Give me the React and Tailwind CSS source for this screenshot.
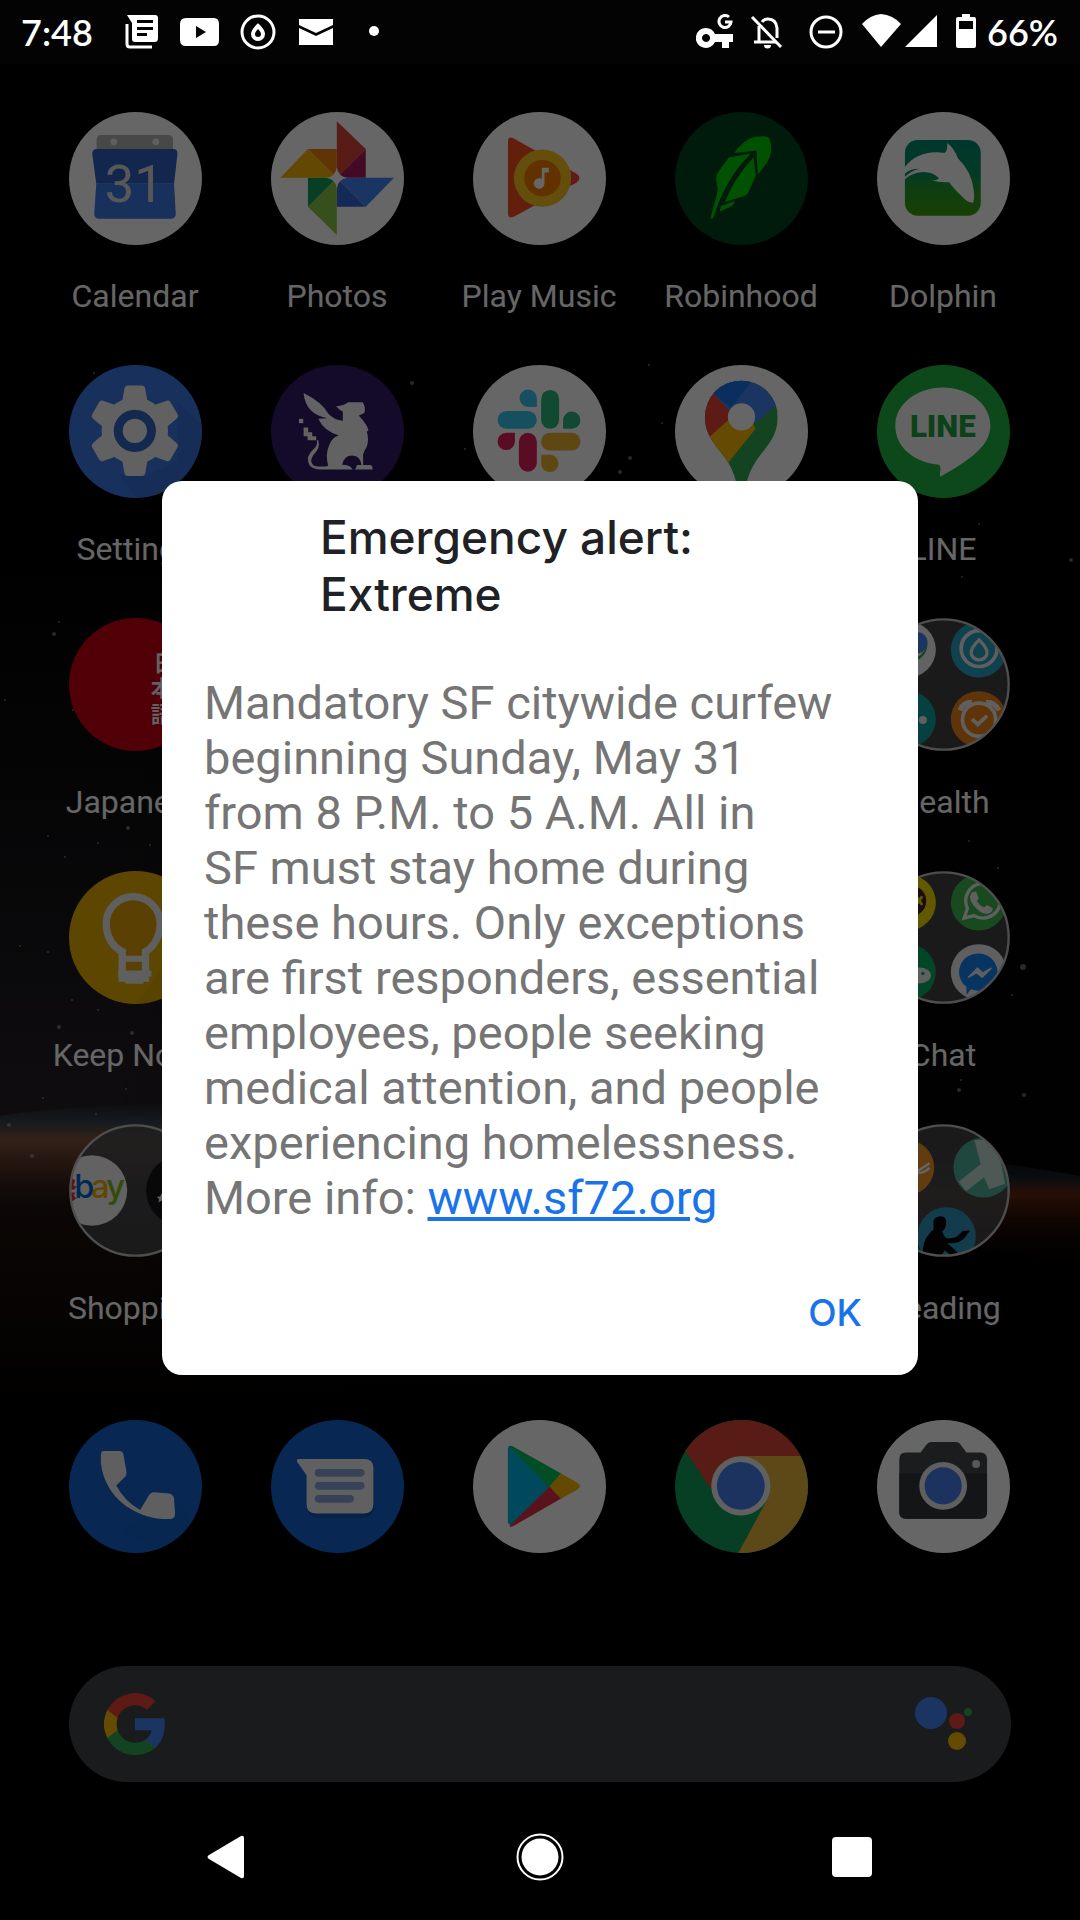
const WHITE = "#fff";

function AppIcon({ bg = "#fff", children }) {
  return (
    <svg viewBox="0 0 400 400" className="block size-[133px] overflow-hidden rounded-full" aria-hidden="true">
      <rect width="400" height="400" fill={bg} />
      {children}
    </svg>
  );
}

function FolderIcon({ id, children }) {
  return (
    <svg viewBox="0 0 400 400" className="block size-[133px]" aria-hidden="true">
      <clipPath id={id}>
        <circle cx="200" cy="200" r="196" />
      </clipPath>
      <g clipPath={`url(#${id})`}>
        <circle cx="200" cy="200" r="196" fill="#4c4c50" fillOpacity="0.85" />
        {children}
      </g>
      <circle cx="200" cy="200" r="196" fill="none" stroke="#c4c4c4" strokeWidth="7" />
    </svg>
  );
}

const CalendarIcon = () => (
  <AppIcon>
    <path d="M83 120V84q0-15 15-15h200q15 0 15 15v36z" fill="#b5b5b5" />
    <circle cx="135" cy="90" r="10" fill="#eee" />
    <circle cx="261" cy="90" r="10" fill="#eee" />
    <path d="M84 111h229q14 0 13 15l-10 90H82L70 126q0-15 14-15z" fill="#2f5fc4" />
    <path d="M82 216h234l5 90q0 15-15 15H91q-15 0-15-15z" fill="#3b78e7" />
    <text x="196" y="272" textAnchor="middle" fontSize="158" fontWeight="400" fontFamily="Roboto, sans-serif" fill="#ddd">31</text>
  </AppIcon>
);

const PhotosIcon = () => (
  <AppIcon>
    <path d="M198 28l87 83-87 87z" fill="#db4437" />
    <path d="M285 111v87h-87z" fill="#a8195f" />
    <path d="M198 198h172l-85 87z" fill="#4285f4" />
    <path d="M198 198l87 87h-87z" fill="#3367d6" />
    <path d="M198 198v172l-87-85z" fill="#8bc34a" />
    <path d="M198 198l-87 87v-87z" fill="#0f9d58" />
    <path d="M28 198l83-87 87 87z" fill="#f4b400" />
    <path d="M111 111h87v87z" fill="#f0860f" />
    <path d="M198 166q4 28 32 32-28 4-32 32-4-28-32-32 28-4 32-32z" fill="#fff" />
  </AppIcon>
);

const PlayMusicIcon = () => (
  <AppIcon>
    <clipPath id="music-tri">
      <path d="M105 90q0-20 18-10l188 106q18 13 0 26L123 315q-18 8-18-12z" />
    </clipPath>
    <g clipPath="url(#music-tri)">
      <rect width="400" height="400" fill="#f4511e" />
      <path d="M209 111a88 88 0 0 1 88 88L240 290 150 265z" fill="#e6a019" />
      <rect x="295" y="150" width="60" height="100" fill="#f2483b" />
    </g>
    <circle cx="209" cy="199" r="86" fill="#fbc31f" />
    <circle cx="209" cy="199" r="55" fill="#f57c00" />
    <path d="M207 168h21v14h-13v33a16 16 0 1 1-8-14z" fill="#fff" />
  </AppIcon>
);

const RobinhoodIcon = () => (
  <AppIcon bg="#00421f">
    <g fill="#00cc05">
      <path d="M178 123q30-42 62-48 28-4 40 1 10 6 9 44-2 24-40 68l-4-72z" />
      <path d="M162 137l66-12q-76 80-96 138l-4-40q-10-24 3-44z" />
      <path d="M236 136l7 54-18 42q-6 20-26 24l-49 15q24-66 86-135z" />
      <path d="M130 228q-4 20-10 42l-14 50h8l16-44q24-60 60-110z" />
      <path d="M138 283l43-15-9 15-37 16z" />
    </g>
  </AppIcon>
);

const DolphinIcon = () => (
  <AppIcon>
    <defs>
      <linearGradient id="dolphin-sea" x1="0" y1="0" x2="0" y2="1">
        <stop offset="0" stopColor="#008a70" />
        <stop offset="0.45" stopColor="#0a9060" />
        <stop offset="0.6" stopColor="#209a35" />
        <stop offset="1" stopColor="#3ea008" />
      </linearGradient>
    </defs>
    <rect x="84" y="84" width="228" height="228" rx="38" fill="url(#dolphin-sea)" />
    <path d="M82 168q34-48 100-47l22 2q9-8 7-30 22 16 32 46 42 40 48 96 3 24-2 38-18 0-32-18-26-24-40-44-24 2-50-4 14-2 20-8-28-26-66-16-24 6-39 22v-8q20-20 46-26-30 0-46 16z" fill="#fff" />
  </AppIcon>
);

const TEETH = [0, 60, 120, 180, 240, 300];

const SettingsIcon = () => (
  <AppIcon bg="#3b78e7">
    <path d="M150 330l80 6 96-50V110l74 70v220H200z" fill="#2f5fc0" opacity="0.25" />
    {TEETH.map((a) => (
      <path key={a} transform={`rotate(${a} 198 198)`} d="M176 62h44q7 0 9 8l7 38q4 14 18 12v40H142v-40q14 2 18-12l7-38q2-8 9-8z" fill="#f3f3f3" />
    ))}
    <circle cx="198" cy="198" r="100" fill="#f3f3f3" />
    <circle cx="198" cy="198" r="50" fill="none" stroke="#3367c6" strokeWidth="27" />
  </AppIcon>
);

const GryphonIcon = () => (
  <AppIcon bg="#341a66">
    <path d="M98 84Q154 112 172 146 190 166 216 168V140Q206 136 196 124 220 122 232 112H276Q284 124 282 142 274 150 264 152 292 182 293 198L288 200Q296 224 288 246 280 258 277 270V301H300Q306 304 306 314H145Q111 312 111 282 111 270 129 252 143 238 137 226H110V214H98V188H112V202H124V214H136V226H142Q150 248 128 270 114 290 128 302 146 308 172 304 162 268 176 238 186 216 204 212 160 200 142 162L170 160Q104 148 98 84z" fill="#f4f4f4" />
    <rect x="84" y="162" width="13" height="13" fill="#f4f4f4" />
    <path d="M214 300Q220 272 244 272 270 274 272 301H258Q258 308 252 316H246Q240 300 214 300z" fill="#341a66" />
  </AppIcon>
);

const SlackIcon = () => (
  <AppIcon>
    <g fill="#36c5f0">
      <rect x="74" y="138" width="118" height="54" rx="27" />
      <path d="M192 126h-27a26 26 0 1 1 27-26z" />
    </g>
    <g fill="#2eb67d">
      <rect x="205" y="75" width="54" height="117" rx="27" />
      <path d="M271 192v-27a26 26 0 1 1 26 27z" />
    </g>
    <g fill="#ecb22e">
      <rect x="205" y="204" width="118" height="53" rx="26" />
      <path d="M205 270h27a26 26 0 1 1-27 26z" />
    </g>
    <g fill="#e01e5a">
      <rect x="138" y="204" width="54" height="117" rx="27" />
      <path d="M126 204v27a26 26 0 1 1-26-27z" />
    </g>
  </AppIcon>
);

const MapsIcon = () => (
  <AppIcon>
    <clipPath id="maps-pin">
      <path d="M200 47a109 109 0 0 1 109 109c0 48-22 78-50 112-22 28-36 54-45 92q-14 30-28 0c-9-38-20-60-38-84-28-36-58-66-58-120A109 109 0 0 1 200 47z" />
    </clipPath>
    <g clipPath="url(#maps-pin)">
      <rect width="400" height="400" fill="#34a853" />
      <path d="M80 240L200 100l42 92-90 112-72-20z" fill="#fbbc04" />
      <path d="M80 70h40l80 60-94 84-46-14z" fill="#ea4335" />
      <path d="M114 84L160 30h160v76l-76 68-60-40-20 4z" fill="#4285f4" />
      <path d="M114 84L150 30h94l-76 100z" fill="#1a73e8" />
    </g>
    <circle cx="200" cy="156" r="41" fill="#fff" />
  </AppIcon>
);

const LineIcon = () => (
  <AppIcon bg="#22b545">
    <path d="M198 68c78 0 143 50 143 114 0 56-50 98-151 154-3-12 6-30-4-36C108 292 55 246 55 182 55 118 120 68 198 68z" fill="#f8f8f8" />
    <text x="198" y="218" textAnchor="middle" fontSize="94" fontWeight="900" fontFamily="Roboto, sans-serif" fill="#1da540">LINE</text>
  </AppIcon>
);

const JapaneseIcon = () => (
  <AppIcon bg="#c8000f">
    <g fontSize="66" fontWeight="700" fontFamily="'Noto Sans CJK JP', sans-serif" fill="#f2f2f2">
      <text x="254" y="160">日</text>
      <text x="246" y="236">本</text>
      <text x="246" y="312">語</text>
    </g>
  </AppIcon>
);

const KeepIcon = () => (
  <AppIcon bg="#e9b000">
    <path d="M250 337l70-130 80 60v133H200z" fill="#b98a00" opacity="0.25" />
    <path d="M160 322v-80c-26-12-48-42-48-84a81 81 0 0 1 162 0c0 42-22 72-44 84v80z" fill="#e0a106" stroke="#eee" strokeWidth="22" />
    <path d="M160 264h76M148 308h100M170 330h54" stroke="#eee" strokeWidth="18" />
  </AppIcon>
);

const ShoppingFolder = () => (
  <FolderIcon id="fold-shop">
    <circle cx="69" cy="200" r="106" fill="#f4f4f4" />
    <path d="M5 160l14 10-6 14 10 4-8 10h-12zM6 206h14l-6 8 8 10-12 8-8-4z" fill="#e53238" />
    <g fontSize="98" fontFamily="Inter, sans-serif" fontWeight="500">
      <text x="16" y="224" fill="#0064d2">b</text>
      <text x="66" y="224" fill="#f5af02">a</text>
      <text x="112" y="224" fill="#86b817">y</text>
    </g>
    <circle cx="338" cy="200" r="106" fill="#161618" />
    <path d="M278 208l4 10 10 1-8 7 3 10-9-5-9 5 2-10-7-7 10-1z" fill="#eee" />
  </FolderIcon>
);

const HealthFolder = () => (
  <FolderIcon id="fold-health">
    <circle cx="93" cy="95" r="84" fill="#f4f4f4" />
    <circle cx="120" cy="74" r="32" fill="#4285f4" />
    <path d="M98 126q40-6 54-46 0 30-34 50z" fill="#34a853" />
    <circle cx="306" cy="95" r="84" fill="#27a4c4" />
    <circle cx="307" cy="92" r="54" fill="none" stroke="#eee" strokeWidth="11" />
    <path d="M307 66q24 24 24 38a24 22 0 0 1-48 0q0-14 24-38z" fill="none" stroke="#eee" strokeWidth="10" />
    <circle cx="93" cy="304" r="84" fill="#0fa0a0" />
    <circle cx="138" cy="307" r="12" fill="#eee" />
    <circle cx="306" cy="304" r="84" fill="#f08318" />
    <circle cx="307" cy="306" r="50" fill="none" stroke="#eee" strokeWidth="11" />
    <path d="M250 278q8-24 36-24M328 254q28 0 38 24" fill="none" stroke="#eee" strokeWidth="16" />
    <path d="M286 304l17 16 28-26" fill="none" stroke="#eee" strokeWidth="11" />
  </FolderIcon>
);

const ChatFolder = () => (
  <FolderIcon id="fold-chat">
    <circle cx="93" cy="95" r="84" fill="#f5dc00" />
    <circle cx="102" cy="90" r="46" fill="#4a2022" />
    <path d="M118 76l18 26m0-26l-18 26" stroke="#f5dc00" strokeWidth="8" />
    <circle cx="306" cy="95" r="84" fill="#3cb84e" />
    <path d="M262 142l10-30a52 52 0 1 1 20 22z" fill="none" stroke="#eee" strokeWidth="10" />
    <path d="M286 64l12-2 8 20-6 8q8 14 22 20l9-8 17 10q0 12-12 16-18 4-38-16-22-22-18-38z" fill="#eee" />
    <circle cx="93" cy="304" r="84" fill="#06ad62" />
    <ellipse cx="128" cy="314" rx="34" ry="24" fill="#eee" />
    <circle cx="138" cy="308" r="5" fill="#06ad62" />
    <circle cx="306" cy="304" r="84" fill="#eee" />
    <path d="M307 248a58 56 0 1 1-24 108l-14 16v-24a58 56 0 0 1 38-100z" fill="#1283f0" />
    <path d="M274 320l28-28 16 14 26-14-28 28-16-14z" fill="#eee" stroke="#eee" strokeWidth="4" />
  </FolderIcon>
);

const ReadingFolder = () => (
  <FolderIcon id="fold-read">
    <circle cx="88" cy="131" r="84" fill="#f0962a" />
    <path d="M116 146l42-28m-34 30q20-2 34-16" stroke="#fff" strokeWidth="7" fill="none" />
    <circle cx="320" cy="131" r="90" fill="#4fb19b" />
    <path d="M293 48H342L358 84 372 66 396 90 372 112 385 180 338 196 322 160 268 202 246 174 312 120z" fill="#c3ddd5" />
    <circle cx="209" cy="338" r="88" fill="#2f96bd" />
    <path d="M170 304Q166 282 186 278 206 276 208 292 208 318 196 322 200 338 210 344 232 344 240 338L258 322 280 320 262 344Q242 362 210 358 238 378 252 400H228L204 380 190 400H138Q134 354 158 330 162 320 170 318z" fill="#050607" />
  </FolderIcon>
);

const PhoneIcon = () => (
  <AppIcon bg="#1565d0">
    <path d="M150 340l140 50 80-90-60-70z" fill="#0e4796" opacity="0.15" />
    <path d="M104 93h48q10 0 12 12l9 52q0 12-9 18l-22 22q26 48 72 74l24-40q6-14 18-14l44 4q14 2 16 16l3 44q0 17-16 17h-22C200 292 108 236 96 130v-24q0-13 8-13z" fill="#eee" />
  </AppIcon>
);

const MessagesIcon = () => (
  <AppIcon bg="#1565d0">
    <rect x="110" y="130" width="200" height="164" rx="30" fill="#0e4796" opacity="0.6" />
    <path d="M84 117h196q28 0 28 28v108q0 28-28 28H135q-28 0-28-28V166L79 126q-4-9 5-9z" fill="#f0f0f0" />
    <path d="M143 159h127M143 198h127M143 237h95" stroke="#8aa4dc" strokeWidth="23" strokeLinecap="round" />
  </AppIcon>
);

const PlayStoreIcon = () => (
  <AppIcon>
    <path d="M105 86v224l10 8 118-119L115 78q-10-2-10 8z" fill="#00b4e6" />
    <path d="M109 79q4-4 14 2l142 80-36 43z" fill="#00c060" />
    <path d="M109 319q4 4 14-1l142-82-34-36z" fill="#e02f44" />
    <path d="M265 161l48 27q18 11 0 22l-48 27-35-38z" fill="#f8b800" />
  </AppIcon>
);

const ChromeIcon = () => (
  <AppIcon bg="#0f9d58">
    <path d="M197 108h210v300H186l89-164z" fill="#e8b43a" />
    <path d="M30 92V0h370v108H197q-76 6-88 100z" fill="#db4437" />
    <circle cx="198" cy="198" r="89" fill="#f1f1f1" />
    <circle cx="198" cy="198" r="72" fill="#4a80ee" />
  </AppIcon>
);

const CameraIcon = () => (
  <AppIcon>
    <path d="M163 66h74q10 0 15 9l17 23h42q20 0 20 20v159q0 20-20 20H87q-20 0-20-20V118q0-20 20-20h44l17-23q6-9 15-9z" fill="#44474b" />
    <path d="M67 160h264v117q0 20-20 20H87q-20 0-20-20z" fill="#33363a" />
    <circle cx="298" cy="132" r="12" fill="#ddd" />
    <circle cx="199" cy="198" r="72" fill="#eee" />
    <circle cx="199" cy="198" r="56" fill="#4a80ee" />
  </AppIcon>
);

const APPS = [
  { name: "Calendar", Icon: CalendarIcon, col: "col-start-1", label: true },
  { name: "Photos", Icon: PhotosIcon, col: "col-start-2", label: true },
  { name: "Play Music", Icon: PlayMusicIcon, col: "col-start-3", label: true },
  { name: "Robinhood", Icon: RobinhoodIcon, col: "col-start-4", label: true },
  { name: "Dolphin", Icon: DolphinIcon, col: "col-start-5", label: true },
  { name: "Settings", Icon: SettingsIcon, col: "col-start-1", label: true },
  { name: "Gryphon", Icon: GryphonIcon, col: "col-start-2", label: false },
  { name: "Slack", Icon: SlackIcon, col: "col-start-3", label: false },
  { name: "Maps", Icon: MapsIcon, col: "col-start-4", label: false },
  { name: "LINE", Icon: LineIcon, col: "col-start-5", label: true },
  { name: "Japanese", Icon: JapaneseIcon, col: "col-start-1", label: true },
  { name: "Health", Icon: HealthFolder, col: "col-start-5", label: true },
  { name: "Keep Notes", Icon: KeepIcon, col: "col-start-1", label: true },
  { name: "Chat", Icon: ChatFolder, col: "col-start-5", label: true },
  { name: "Shopping", Icon: ShoppingFolder, col: "col-start-1", label: true },
  { name: "Reading", Icon: ReadingFolder, col: "col-start-5", label: true },
];

const DOCK = [
  { name: "Phone", Icon: PhoneIcon },
  { name: "Messages", Icon: MessagesIcon },
  { name: "Play Store", Icon: PlayStoreIcon },
  { name: "Chrome", Icon: ChromeIcon },
  { name: "Camera", Icon: CameraIcon },
];

const STARS = [
  [94, 373, 1], [412, 383, 2], [465, 449, 1], [649, 365, 1], [662, 423, 1], [630, 458, 2], [620, 472, 2],
  [979, 524, 1], [1071, 560, 2], [962, 577, 1], [59, 622, 1], [54, 634, 2], [73, 710, 1], [128, 828, 2],
  [48, 836, 1], [65, 857, 1], [98, 843, 1], [150, 845, 1], [48, 952, 1], [59, 1027, 2], [132, 1033, 2],
  [98, 1010, 1], [72, 1000, 1], [32, 1156, 2], [126, 1089, 1], [96, 1114, 1], [43, 1098, 1], [1023, 967, 3],
  [1012, 995, 1], [959, 1090, 2], [961, 1080, 1], [1024, 1095, 2], [969, 841, 1], [998, 868, 1],
  [5, 700, 1], [20, 946, 1], [9, 1125, 2],
];

function Wallpaper() {
  return (
    <svg viewBox="0 0 1080 1920" preserveAspectRatio="none" className="absolute inset-0 h-full w-full" aria-hidden="true">
      <defs>
        <linearGradient id="sky" x1="0" y1="0" x2="0" y2="1">
          <stop offset="0" stopColor="#000" />
          <stop offset="0.3" stopColor="#020203" />
          <stop offset="0.45" stopColor="#121215" />
          <stop offset="0.56" stopColor="#241e24" />
          <stop offset="0.59" stopColor="#241e24" />
          <stop offset="0.64" stopColor="#1c100c" />
          <stop offset="0.74" stopColor="#000" />
        </linearGradient>
        <linearGradient id="night" x1="0" y1="0" x2="1" y2="0">
          <stop offset="0.1" stopColor="#000" stopOpacity="0" />
          <stop offset="0.8" stopColor="#000" stopOpacity="0.85" />
        </linearGradient>
        <linearGradient id="glow" x1="0" y1="0" x2="0" y2="1">
          <stop offset="0" stopColor="#34404e" stopOpacity="0" />
          <stop offset="0.2" stopColor="#3a444e" />
          <stop offset="0.34" stopColor="#7d533e" />
          <stop offset="0.55" stopColor="#5c3628" />
          <stop offset="1" stopColor="#24130d" stopOpacity="0" />
        </linearGradient>
        <linearGradient id="dusk" x1="0" y1="0" x2="0" y2="1">
          <stop offset="0" stopColor="#1a2228" stopOpacity="0" />
          <stop offset="0.24" stopColor="#1a2228" />
          <stop offset="0.38" stopColor="#60240f" />
          <stop offset="0.6" stopColor="#2c1009" />
          <stop offset="1" stopColor="#0c0503" stopOpacity="0" />
        </linearGradient>
      </defs>
      <rect width="1080" height="1920" fill="url(#sky)" />
      <rect width="1080" height="1920" fill="url(#night)" />
      <path d="M0 1116Q100 1100 400 1100V1200Q100 1195 0 1215z" fill="url(#glow)" />
      <path d="M780 1150Q960 1153 1080 1176V1265Q960 1240 780 1235z" fill="url(#dusk)" />
      {STARS.map(([x, y, r]) => (
        <circle key={`${x}-${y}`} cx={x} cy={y} r={r} fill="#aaa" fillOpacity="0.6" />
      ))}
    </svg>
  );
}

function StatusBar() {
  return (
    <header className="relative z-20 flex h-16 items-center justify-between bg-[#030303] pr-[22px] pl-[21px] font-['Lato',sans-serif] text-[36px] leading-none font-semibold text-white">
      <div className="flex items-center">
        <span className="w-[102px]">7:48</span>
        <svg className="h-[36px] w-[256px]" viewBox="123 14 256 36" fill={WHITE} aria-hidden="true">
          <path fillRule="evenodd" d="M127 15h28q3 0 3 3v20q0 4-3 4h-20q-3 0-3-3V23zM137 20v3h16v-3zM137 27v3h16v-3zM137 33v3h10v-3z" />
          <path d="M127 24v20q0 3 3 3h22" fill="none" stroke={WHITE} strokeWidth="3" />
          <path fillRule="evenodd" d="M186 18h28q5 0 5 6v16q0 6-5 6h-28q-6 0-6-6V24q0-6 6-6zM196 26v12l10-6z" />
          <circle cx="258" cy="32" r="16" fill="none" stroke={WHITE} strokeWidth="3" />
          <path d="M258 26q5 5 5 8a5 5 0 0 1-10 0q0-3 5-8z" fill="none" stroke={WHITE} strokeWidth="4" />
          <path d="M299 19h34v6l-17 8-17-8zM299 28l17 8 17-8v17h-34z" />
          <circle cx="374" cy="31" r="5" />
        </svg>
      </div>
      <div className="flex items-center gap-[11px]">
        <svg className="h-[36px] w-[280px]" viewBox="696 14 280 36" fill={WHITE} aria-hidden="true">
          <path fillRule="evenodd" d="M706 28a10 10 0 0 1 9 6h18v8h-4v6h-7v-6h-7a10 10 0 1 1-9-14zm0 6a4 4 0 1 0 .1 0z" />
          <path d="M729 17a6 6 0 1 0 2 5h-6" fill="none" stroke={WHITE} strokeWidth="3" />
          <path d="M752 17l29 30" stroke={WHITE} strokeWidth="3" />
          <path d="M759 26v16M754 42h22M762 22q2-3 6-3 8 0 9 9v10" fill="none" stroke={WHITE} strokeWidth="3" />
          <path d="M765 19a3 3 0 0 1 5 0zM764 45h7a3 3 0 0 1-7 0z" />
          <circle cx="826" cy="32" r="15" fill="none" stroke={WHITE} strokeWidth="3" />
          <path d="M818 32h17" stroke={WHITE} strokeWidth="3" />
          <path d="M862 24q8-9 19-10 12 1 20 10l-20 23zM937 15v32h-32z" />
          <path fillRule="evenodd" d="M962 14h8v3h4q2 0 2 2v27q0 2-2 2h-16q-2 0-2-2V19q0-2 2-2h4zM959 21v8h14v-8z" />
        </svg>
        <span>66%</span>
      </div>
    </header>
  );
}

function GoogleG() {
  return (
    <svg viewBox="1 1 22 22" className="size-[62px]" aria-hidden="true">
      <path fill="#4285f4" d="M22.560 12.250c0-.78-.07-1.530-.2-2.250H12v4.260h5.920a5.060 5.060 0 0 1-2.200 3.320v2.770h3.570c2.080-1.920 3.270-4.740 3.270-8.100z" />
      <path fill="#34a853" d="M12 23c2.970 0 5.460-.98 7.280-2.660l-3.570-2.770c-.98.66-2.230 1.060-3.710 1.060-2.860 0-5.290-1.930-6.160-4.530H2.180v2.840A11 11 0 0 0 12 23z" />
      <path fill="#fbbc05" d="M5.840 14.090a6.600 6.600 0 0 1 0-4.180V7.070H2.180a11 11 0 0 0 0 9.860z" />
      <path fill="#ea4335" d="M12 5.380c1.620 0 3.060.56 4.210 1.640l3.150-3.150A11 11 0 0 0 2.180 7.070l3.660 2.840C6.710 7.310 9.140 5.380 12 5.380z" />
    </svg>
  );
}

function AssistantDots() {
  return (
    <svg viewBox="914 1696 58 54" className="h-[54px] w-[58px]" aria-hidden="true">
      <circle cx="930" cy="1712" r="16" fill="#4285f4" />
      <circle cx="956" cy="1720" r="8" fill="#ea4335" />
      <circle cx="967" cy="1711" r="4" fill="#34a853" />
      <circle cx="956" cy="1740" r="9" fill="#fbbc04" />
    </svg>
  );
}

function AlertDialog() {
  return (
    <div className="absolute inset-0 z-10 flex items-center justify-center bg-black/60 pb-16">
      <section role="alertdialog" aria-labelledby="alert-title" aria-describedby="alert-body" className="flex w-[70%] flex-col rounded-[20px] bg-white px-[42px] pt-7 pb-[30px] font-['Roboto',sans-serif]">
        <h1 id="alert-title" className="pl-[116px] font-['Inter',sans-serif] text-[46px] leading-[57px] font-medium text-[#202124]">
          Emergency alert:
          <br />
          Extreme
        </h1>
        <p id="alert-body" className="mt-[52px] pr-9 text-[47px] leading-[55px] text-[#757575]">
          Mandatory SF citywide curfew beginning Sunday, May 31 from 8 P.M. to 5 A.M. All in
          <br />
          SF must stay home during these hours. Only exceptions are first responders, essential employees, people seeking medical attention, and people experiencing homelessness. More info:{" "}
          <a href="#sf72" className="text-[#1a73e8] underline">www.sf72.org</a>
        </p>
        <button type="button" className="mt-14 h-16 self-end px-[14px] font-['Inter',sans-serif] text-[37px] font-medium text-[#1a73e8]">
          OK
        </button>
      </section>
    </div>
  );
}

function NavBar() {
  return (
    <nav className="relative z-20 grid h-[126px] grid-cols-3 px-[72px]">
      <button type="button" aria-label="Back" className="flex items-center justify-center">
        <svg viewBox="0 0 48 48" className="size-12" fill={WHITE}>
          <path d="M37 3q3-1 3 2v38q0 3-3 2L5 26q-3-2 0-4z" />
        </svg>
      </button>
      <button type="button" aria-label="Home" className="flex items-center justify-center">
        <svg viewBox="0 0 48 48" className="size-12" fill={WHITE}>
          <circle cx="24" cy="24" r="18.500" />
          <circle cx="24" cy="24" r="22.500" fill="none" stroke={WHITE} strokeWidth="2" />
        </svg>
      </button>
      <button type="button" aria-label="Recent apps" className="flex items-center justify-center">
        <span className="size-10 rounded-[4px] bg-white" />
      </button>
    </nav>
  );
}

export default function App() {
  return (
    <div className="relative flex min-h-screen flex-col overflow-hidden bg-black font-['Roboto',sans-serif]">
      <Wallpaper />
      <StatusBar />
      <main className="relative flex flex-1 flex-col">
        <div className="grid grid-cols-5 gap-y-[49px] pt-12 pr-9 pl-[34px]">
          {APPS.map(({ name, Icon, col, label }) => (
            <button key={name} type="button" aria-label={name} className={`flex flex-col items-center gap-[31px] ${col}`}>
              <Icon />
              <span className="h-10 text-[32px] leading-10 whitespace-nowrap text-white">{label ? name : null}</span>
            </button>
          ))}
        </div>
        <div className="mt-[92px] grid grid-cols-5 pr-9 pl-[34px]">
          {DOCK.map(({ name, Icon }) => (
            <button key={name} type="button" aria-label={name} className="flex justify-center">
              <Icon />
            </button>
          ))}
        </div>
        <div className="mx-[69px] mt-[113px] mb-3 flex h-[116px] items-center justify-between rounded-full bg-[#424447] pr-[38px] pl-[35px]">
          <GoogleG />
          <input type="search" aria-label="Search" className="min-w-0 flex-1 bg-transparent px-6 text-[32px] text-white outline-none" />
          <AssistantDots />
        </div>
      </main>
      <AlertDialog />
      <NavBar />
    </div>
  );
}
